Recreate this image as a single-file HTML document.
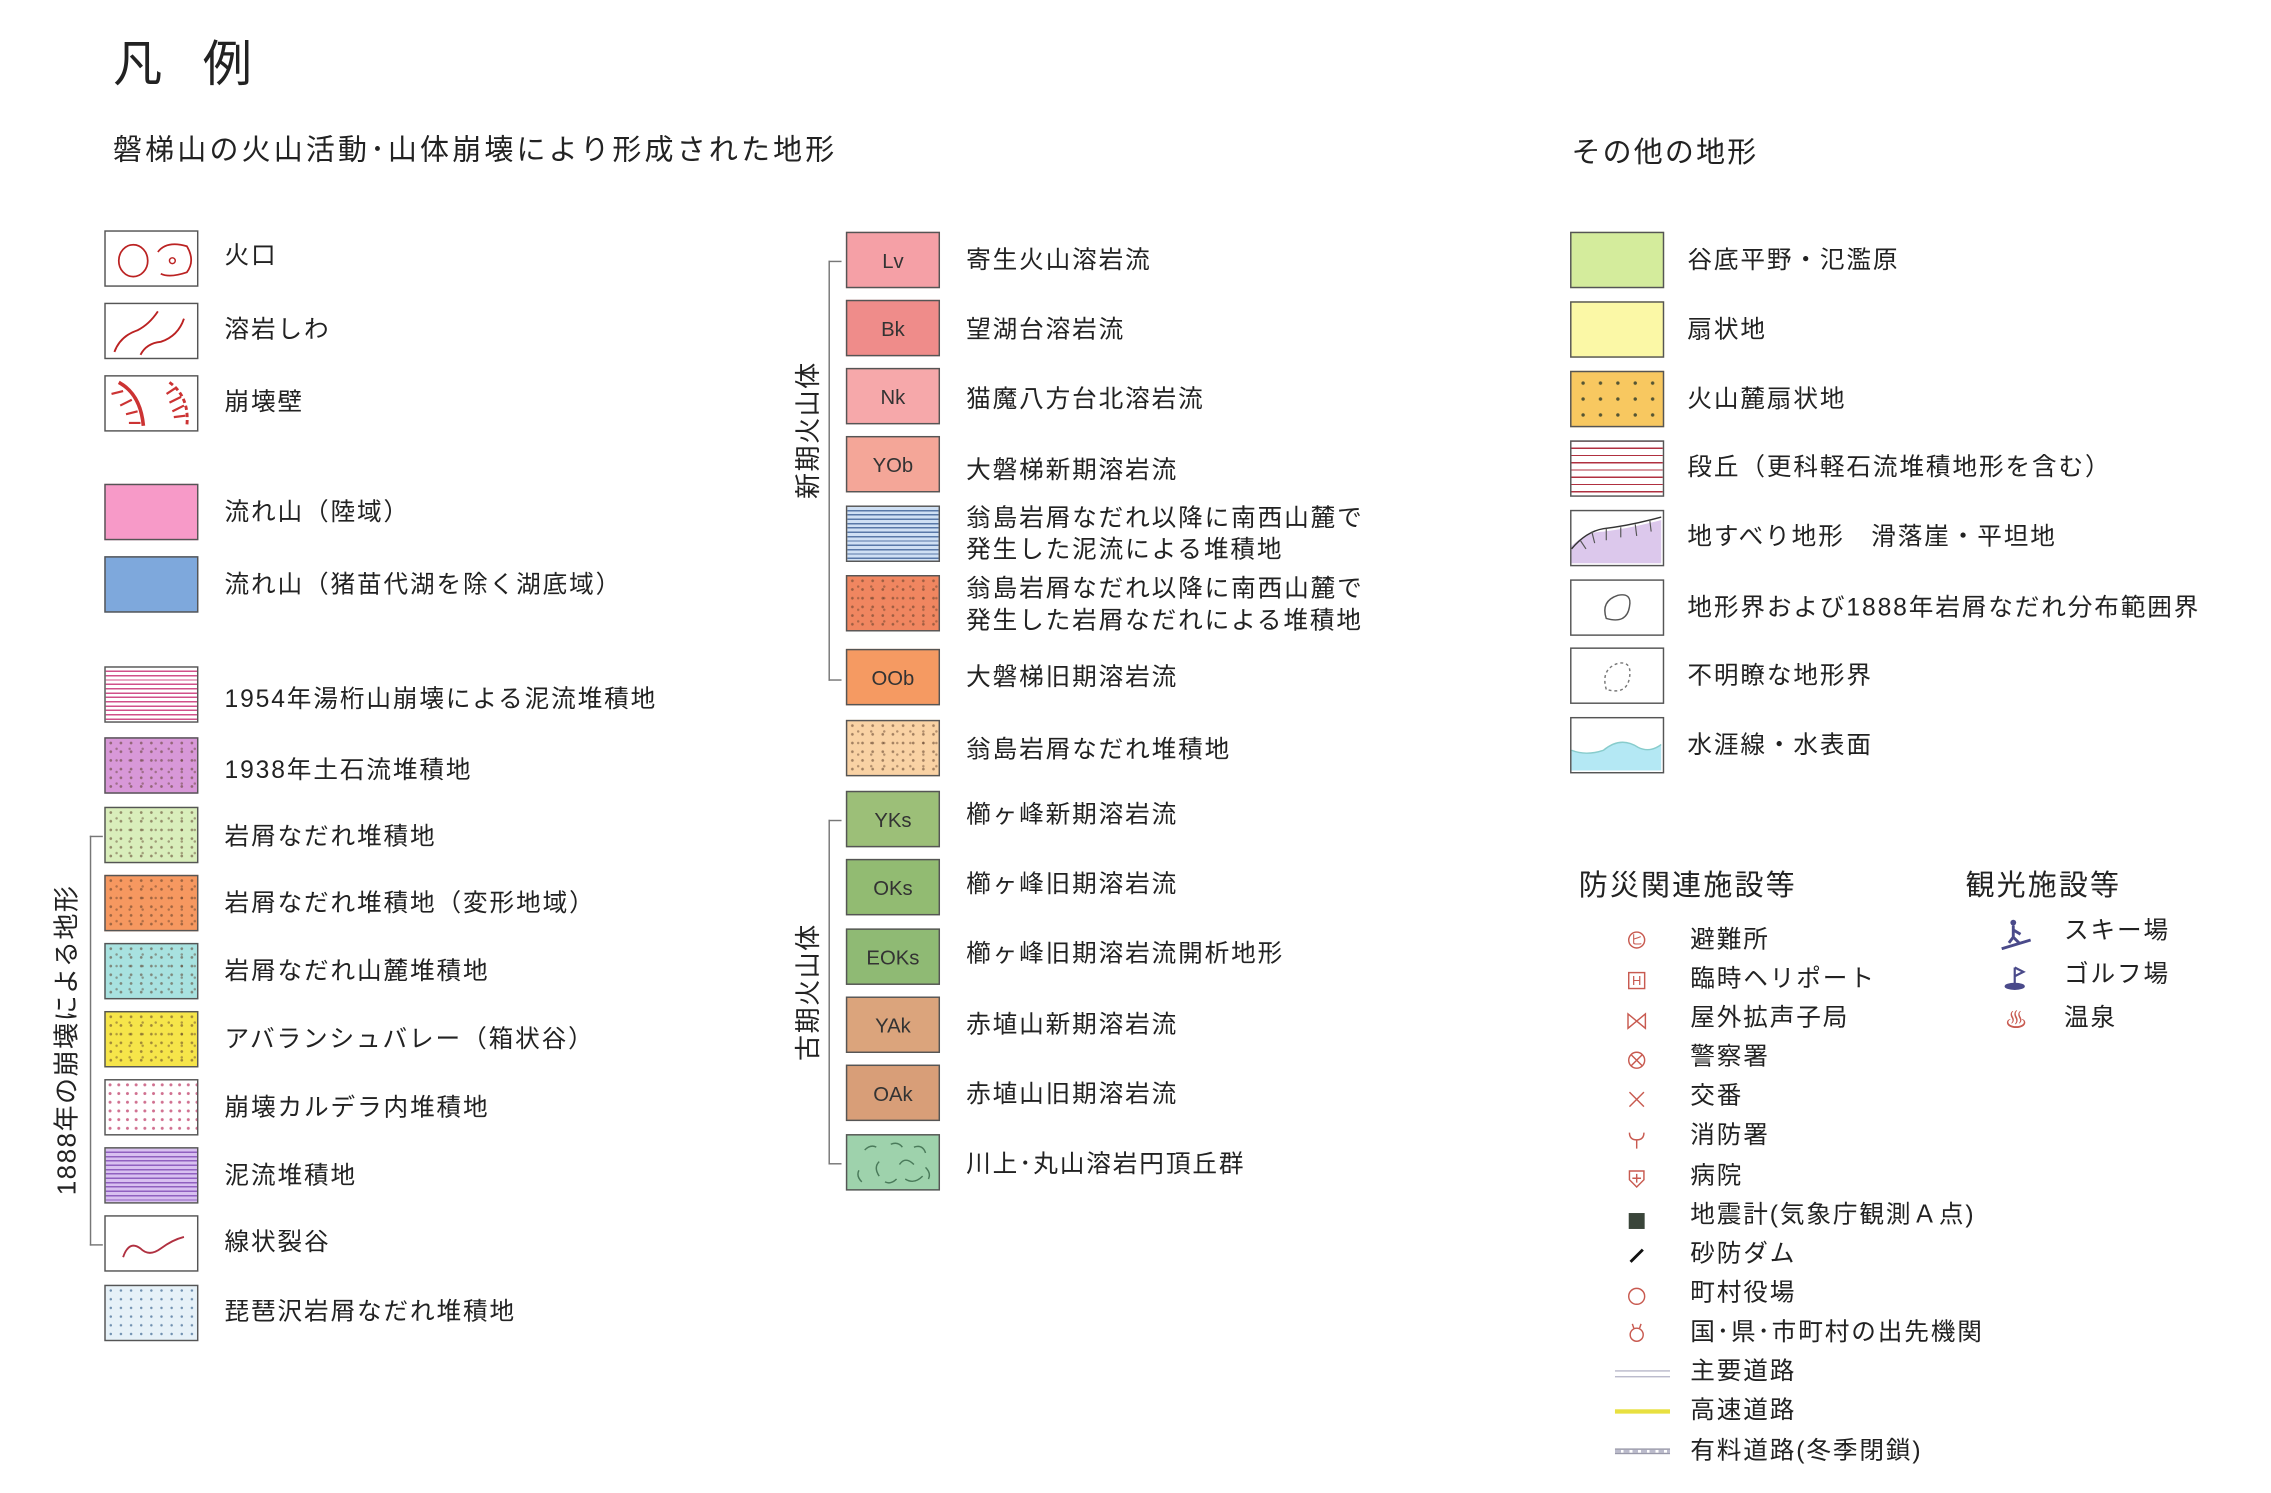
<!DOCTYPE html>
<html><head><meta charset="utf-8"><style>
html,body{margin:0;padding:0;background:#fff;width:2271px;height:1493px;overflow:hidden}
#w{position:absolute;left:0;top:0;width:1568px;height:1031px;transform:scale(1.4484);transform-origin:0 0;font-family:"Liberation Sans","Noto Sans CJK JP",sans-serif;color:#222}
.a{position:absolute}
.s{position:absolute;width:65px;height:39px;border:1px solid #555;box-sizing:border-box}
.l{position:absolute;font-size:17px;white-space:nowrap;line-height:20px;transform:translateY(-50%);letter-spacing:1.3px}
.c{display:flex;align-items:center;justify-content:center;font-size:14px;color:#333}
.dots{background-image:radial-gradient(circle,rgba(90,60,40,.55) 0.8px,transparent 1.1px),radial-gradient(circle,rgba(90,60,40,.45) 0.7px,transparent 1px);background-size:7px 6px,9px 8px;background-position:0 0,3px 3px}
.v{position:absolute;font-size:18px;white-space:nowrap;letter-spacing:1px;transform:translate(-50%,-50%) rotate(-90deg);line-height:20px}
.ic{position:absolute;transform:translate(-50%,-50%);color:#c85a50;font-size:13px;line-height:1}
</style></head><body><div id="w">
<div class="a" style="left:78px;top:17px;font-size:34px;letter-spacing:28px">凡例</div>
<div class="a" style="left:78px;top:87px;font-size:20px;letter-spacing:2.2px">磐梯山の火山活動･山体崩壊により形成された地形</div>
<div class="a" style="left:1085px;top:89px;font-size:20px;letter-spacing:1.5px">その他の地形</div>

<!-- left column -->
<div class="s" style="left:72px;top:159px;background:#fff"><svg width="62" height="36"><ellipse cx="19" cy="20" rx="10" ry="11" fill="none" stroke="#b22" stroke-width="1.2"/><path d="M36 14 Q42 6 56 10 Q62 20 56 28 Q44 32 38 29" fill="none" stroke="#b22" stroke-width="1.2"/><circle cx="46" cy="20" r="2" fill="none" stroke="#b22"/></svg></div>
<div class="l" style="left:155px;top:177px">火口</div>
<div class="s" style="left:72px;top:209px;background:#fff"><svg width="62" height="36"><path d="M6 33 Q10 22 22 18 Q30 14 36 5 M24 35 Q28 27 38 26 Q50 22 54 10" fill="none" stroke="#b22" stroke-width="1.3"/></svg></div>
<div class="l" style="left:155px;top:228px">溶岩しわ</div>
<div class="s" style="left:72px;top:259px;background:#fff"><svg width="62" height="36"><path d="M9 4 Q24 12 26 34" fill="none" stroke="#c33" stroke-width="2.5"/><path d="M12 10 L4 12 M18 16 L10 20 M22 24 L14 26 M24 32 L16 32" stroke="#c33" stroke-width="1.5"/><path d="M44 4 Q58 14 56 34" fill="none" stroke="#c33" stroke-width="2" stroke-dasharray="3 2"/><path d="M48 8 L42 12 M52 14 L44 18 M54 20 L46 24 M55 27 L47 28" stroke="#c33" stroke-width="1.5"/></svg></div>
<div class="l" style="left:155px;top:278px">崩壊壁</div>
<div class="s" style="left:72px;top:334px;background:#f79ac8"></div>
<div class="l" style="left:155px;top:354px">流れ山（陸域）</div>
<div class="s" style="left:72px;top:384px;background:#7ea8dc"></div>
<div class="l" style="left:155px;top:404px">流れ山（猪苗代湖を除く湖底域）</div>
<div class="s" style="left:72px;top:460px;background:repeating-linear-gradient(#fff 0 2px,#d0508a 2px 3px)"></div>
<div class="l" style="left:155px;top:483px">1954年湯桁山崩壊による泥流堆積地</div>
<div class="s dots" style="left:72px;top:509px;background-color:#d898d8"></div>
<div class="l" style="left:155px;top:532px">1938年土石流堆積地</div>
<div class="s dots" style="left:72px;top:557px;background-color:#d9eebb"></div>
<div class="l" style="left:155px;top:578px">岩屑なだれ堆積地</div>
<div class="s dots" style="left:72px;top:604px;background-color:#f69860"></div>
<div class="l" style="left:155px;top:624px">岩屑なだれ堆積地（変形地域）</div>
<div class="s dots" style="left:72px;top:651px;background-color:#a8e2e0"></div>
<div class="l" style="left:155px;top:671px">岩屑なだれ山麓堆積地</div>
<div class="s dots" style="left:72px;top:698px;background-color:#f6e54a"></div>
<div class="l" style="left:155px;top:718px">アバランシュバレー（箱状谷）</div>
<div class="s" style="left:72px;top:745px;background-color:#fff;background-image:radial-gradient(circle,#d07090 0.9px,transparent 1.2px);background-size:6px 6px"></div>
<div class="l" style="left:155px;top:765px">崩壊カルデラ内堆積地</div>
<div class="s" style="left:72px;top:792px;background:repeating-linear-gradient(#d8c0f0 0 2px,#9060c0 2px 3px)"></div>
<div class="l" style="left:155px;top:812px">泥流堆積地</div>
<div class="s" style="left:72px;top:839px;background:#fff"><svg width="62" height="36"><path d="M12 28 Q16 16 24 22 Q30 28 38 22 Q46 16 54 14" fill="none" stroke="#b03040" stroke-width="1.3"/></svg></div>
<div class="l" style="left:155px;top:858px">線状裂谷</div>
<div class="s" style="left:72px;top:887px;background-color:#e6f1f8;background-image:radial-gradient(circle,#7090b0 0.7px,transparent 1px);background-size:7px 6px"></div>
<div class="l" style="left:155px;top:906px">琵琶沢岩屑なだれ堆積地</div>
<div class="a" style="left:62px;top:577px;width:8px;height:281px;border:1px solid #777;border-right:none"></div>
<div class="v" style="left:46px;top:718px">1888年の崩壊による地形</div>

<!-- middle column -->
<div class="s c" style="left:584px;top:160px;background:#f5a0a6">Lv</div>
<div class="l" style="left:667px;top:180px">寄生火山溶岩流</div>
<div class="s c" style="left:584px;top:207px;background:#ef8c8a">Bk</div>
<div class="l" style="left:667px;top:228px">望湖台溶岩流</div>
<div class="s c" style="left:584px;top:254px;background:#f6a8aa">Nk</div>
<div class="l" style="left:667px;top:276px">猫魔八方台北溶岩流</div>
<div class="s c" style="left:584px;top:301px;background:#f4a698">YOb</div>
<div class="l" style="left:667px;top:325px">大磐梯新期溶岩流</div>
<div class="s" style="left:584px;top:349px;background:repeating-linear-gradient(#cfe0f4 0 2px,#5878a8 2px 3px)"></div>
<div class="l" style="left:667px;top:369px;line-height:22px">翁島岩屑なだれ以降に南西山麓で<br>発生した泥流による堆積地</div>
<div class="s dots" style="left:584px;top:397px;background-color:#f08660"></div>
<div class="l" style="left:667px;top:418px;line-height:22px">翁島岩屑なだれ以降に南西山麓で<br>発生した岩屑なだれによる堆積地</div>
<div class="s c" style="left:584px;top:448px;background:#f59a62">OOb</div>
<div class="l" style="left:667px;top:468px">大磐梯旧期溶岩流</div>
<div class="s dots" style="left:584px;top:497px;background-color:#f9d2a4"></div>
<div class="l" style="left:667px;top:518px">翁島岩屑なだれ堆積地</div>
<div class="s c" style="left:584px;top:546px;background:#9cbf78">YKs</div>
<div class="l" style="left:667px;top:563px">櫛ヶ峰新期溶岩流</div>
<div class="s c" style="left:584px;top:593px;background:#92bb72">OKs</div>
<div class="l" style="left:667px;top:611px">櫛ヶ峰旧期溶岩流</div>
<div class="s c" style="left:584px;top:641px;background:#8fba74">EOKs</div>
<div class="l" style="left:667px;top:659px">櫛ヶ峰旧期溶岩流開析地形</div>
<div class="s c" style="left:584px;top:688px;background:#dba47c">YAk</div>
<div class="l" style="left:667px;top:708px">赤埴山新期溶岩流</div>
<div class="s c" style="left:584px;top:735px;background:#d89e78">OAk</div>
<div class="l" style="left:667px;top:756px">赤埴山旧期溶岩流</div>
<div class="s" style="left:584px;top:783px;background:#9ed2ac"><svg width="62" height="36"><g fill="none" stroke="#4a7a5a" stroke-width="1"><path d="M12 10 Q16 6 20 8 M30 6 Q35 4 38 8 M46 8 Q52 6 54 12 M8 24 Q6 28 10 32 M22 18 Q18 22 22 28 M36 20 Q40 14 46 20 M40 30 Q46 34 52 28 M26 32 Q30 34 34 30 M54 22 Q58 26 56 30"/></g></svg></div>
<div class="l" style="left:667px;top:804px">川上･丸山溶岩円頂丘群</div>
<div class="a" style="left:572px;top:180px;width:8px;height:288px;border:1px solid #777;border-right:none"></div>
<div class="v" style="left:558px;top:297px">新期火山体</div>
<div class="a" style="left:572px;top:566px;width:8px;height:236px;border:1px solid #777;border-right:none"></div>
<div class="v" style="left:558px;top:685px">古期火山体</div>

<!-- right column -->
<div class="s" style="left:1084px;top:160px;background:#d4ec9c"></div>
<div class="l" style="left:1165px;top:180px">谷底平野・氾濫原</div>
<div class="s" style="left:1084px;top:208px;background:#fbf8a6"></div>
<div class="l" style="left:1165px;top:228px">扇状地</div>
<div class="s" style="left:1084px;top:256px;background-color:#f8c860;background-image:radial-gradient(circle,#553 1px,transparent 1.4px);background-size:12px 11px;background-position:2px 2px"></div>
<div class="l" style="left:1165px;top:276px">火山麓扇状地</div>
<div class="s" style="left:1084px;top:304px;background:repeating-linear-gradient(#fff 0 4px,#b03040 4px 5px)"></div>
<div class="l" style="left:1165px;top:323px">段丘（更科軽石流堆積地形を含む）</div>
<div class="s" style="left:1084px;top:352px;background:#fff"><svg width="62" height="36"><path d="M0 36 L0 24 Q10 14 22 14 Q40 12 62 6 L62 36Z" fill="#dcc8ec"/><path d="M0 26 Q10 14 22 12 Q40 10 62 4" fill="none" stroke="#333" stroke-width="1"/><path d="M6 20 L10 26 M14 14 L16 22 M24 12 L24 20 M34 11 L34 18 M44 9 L45 17 M54 6 L55 14" stroke="#555" stroke-width=".8"/></svg></div>
<div class="l" style="left:1165px;top:371px">地すべり地形　滑落崖・平坦地</div>
<div class="s" style="left:1084px;top:400px;background:#fff"><svg width="62" height="36"><path d="M24 26 Q20 14 32 10 Q42 8 40 18 Q38 30 24 26Z" fill="none" stroke="#555" stroke-width="1"/></svg></div>
<div class="l" style="left:1165px;top:420px">地形界および1888年岩屑なだれ分布範囲界</div>
<div class="s" style="left:1084px;top:447px;background:#fff"><svg width="62" height="36"><path d="M24 28 Q20 14 32 10 Q42 8 40 20 Q38 32 24 28Z" fill="none" stroke="#777" stroke-width="1" stroke-dasharray="2 2"/></svg></div>
<div class="l" style="left:1165px;top:467px">不明瞭な地形界</div>
<div class="s" style="left:1084px;top:495px;background:#fff"><svg width="62" height="36"><path d="M0 22 Q10 26 22 22 Q34 12 46 20 Q54 24 62 18 L62 36 L0 36Z" fill="#b4e8f4"/><path d="M0 22 Q10 26 22 22 Q34 12 46 20 Q54 24 62 18" fill="none" stroke="#8cc" stroke-width="1"/></svg></div>
<div class="l" style="left:1165px;top:515px">水涯線・水表面</div>

<div class="a" style="left:1090px;top:595px;font-size:20px;letter-spacing:1.5px">防災関連施設等</div>
<div class="a" style="left:1357px;top:595px;font-size:20px;letter-spacing:1.5px">観光施設等</div>
<div class="ic" style="left:1130px;top:649px;font-size:9px;border:1px solid #c85a50;border-radius:50%;width:10px;height:10px;line-height:10px;text-align:center">ヒ</div><div class="l" style="left:1167px;top:649px">避難所</div>
<div class="ic" style="left:1130px;top:677px;font-size:9px;border:1px solid #c85a50;width:10px;height:10px;line-height:10px;text-align:center">H</div><div class="l" style="left:1167px;top:676px">臨時ヘリポート</div>
<div class="ic" style="left:1130px;top:706px"><svg width="14" height="12"><path d="M1 1 L13 11 L13 1 L1 11Z" fill="none" stroke="#c85a50"/></svg></div><div class="l" style="left:1167px;top:703px">屋外拡声子局</div>
<div class="ic" style="left:1130px;top:733px"><svg width="13" height="13"><circle cx="6.5" cy="6.5" r="5.5" fill="none" stroke="#c85a50"/><path d="M2.6 2.6 L10.4 10.4 M10.4 2.6 L2.6 10.4" stroke="#c85a50"/></svg></div><div class="l" style="left:1167px;top:730px">警察署</div>
<div class="ic" style="left:1130px;top:760px"><svg width="12" height="12"><path d="M1 1 L11 11 M11 1 L1 11" stroke="#c85a50"/></svg></div><div class="l" style="left:1167px;top:757px">交番</div>
<div class="ic" style="left:1130px;top:788px"><svg width="12" height="14"><path d="M1 2 Q1 7 6 7 Q11 7 11 2 M6 7 L6 13" fill="none" stroke="#c85a50"/></svg></div><div class="l" style="left:1167px;top:784px">消防署</div>
<div class="ic" style="left:1130px;top:815px"><svg width="12" height="13"><path d="M1 1 H11 V7 L6 12 L1 7Z M6 3 V9 M3 6 H9" fill="none" stroke="#c85a50"/></svg></div><div class="l" style="left:1167px;top:812px">病院</div>
<div class="ic" style="left:1130px;top:843px;width:11px;height:11px;background:#3a453a"></div><div class="l" style="left:1167px;top:839px">地震計(気象庁観測Ａ点)</div>
<div class="ic" style="left:1130px;top:867px;width:12px;height:2px;background:#111;transform:translate(-50%,-50%) rotate(-45deg)"></div><div class="l" style="left:1167px;top:866px">砂防ダム</div>
<div class="ic" style="left:1130px;top:895px;width:10px;height:10px;border:1px solid #c85a50;border-radius:50%"></div><div class="l" style="left:1167px;top:893px">町村役場</div>
<div class="ic" style="left:1130px;top:921px"><svg width="12" height="14"><circle cx="6" cy="8.5" r="4.5" fill="none" stroke="#c85a50"/><path d="M3 1 L4 4 M9 1 L8 4" stroke="#c85a50"/></svg></div><div class="l" style="left:1167px;top:920px">国･県･市町村の出先機関</div>
<div class="a" style="left:1115px;top:946px;width:38px;height:3px;border-top:1px solid #bbc;border-bottom:1px solid #bbc"></div><div class="l" style="left:1167px;top:947px">主要道路</div>
<div class="a" style="left:1115px;top:973px;width:38px;height:3px;background:#e8e040"></div><div class="l" style="left:1167px;top:974px">高速道路</div>
<div class="a" style="left:1115px;top:1000px;width:38px;height:2px;border-top:1px solid #99a;border-bottom:1px solid #99a;background:repeating-linear-gradient(90deg,#bbc 0 4px,transparent 4px 6px)"></div><div class="l" style="left:1167px;top:1002px">有料道路(冬季閉鎖)</div>

<div class="ic" style="left:1392px;top:646px"><svg width="24" height="22"><circle cx="10" cy="3" r="2" fill="#4a4a8a"/><path d="M10 5 L10 13 L14 17 M10 8 L15 11 M10 13 L7 17 M2 21 L22 15" fill="none" stroke="#4a4a8a" stroke-width="2"/></svg></div><div class="l" style="left:1425px;top:643px">スキー場</div>
<div class="ic" style="left:1392px;top:676px"><svg width="20" height="20"><path d="M9 3 L9 14 M9 3 L15 6 L9 9" fill="none" stroke="#4a4a8a" stroke-width="1.5"/><ellipse cx="9" cy="16" rx="7" ry="2.5" fill="#4a4a8a"/></svg></div><div class="l" style="left:1425px;top:673px">ゴルフ場</div>
<div class="ic" style="left:1392px;top:705px;font-size:15px">♨</div><div class="l" style="left:1425px;top:703px">温泉</div>
</div></body></html>
